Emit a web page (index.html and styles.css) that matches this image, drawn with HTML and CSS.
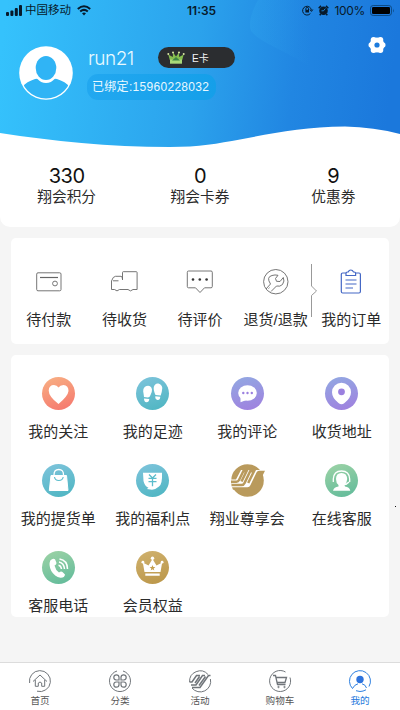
FILE: index.html
```html
<!DOCTYPE html>
<html lang="zh-CN">
<head>
<meta charset="utf-8">
<title>我的</title>
<link rel="stylesheet" href="styles.css">
</head>
<body>
<div class="app">
<header class="head">
  <svg class="wave" viewBox="0 0 400 150">
    <defs>
      <linearGradient id="sky" gradientUnits="userSpaceOnUse" x1="0" y1="55" x2="390" y2="100"><stop offset="0" stop-color="#35c2fc"/><stop offset=".5" stop-color="#2ba2ec"/><stop offset=".75" stop-color="#2186e2"/><stop offset="1" stop-color="#1b78dc"/></linearGradient>
      <linearGradient id="haze" gradientUnits="userSpaceOnUse" x1="250" y1="0" x2="310" y2="0"><stop offset="0" stop-color="#35aef0" stop-opacity=".22"/><stop offset="1" stop-color="#35aef0" stop-opacity="0"/></linearGradient>
    </defs>
    <path fill="url(#sky)" d="M0 0H400V134Q374 127 345 126.500C304 127 273 133 240 139.500C218 143.500 199 147 170 147C108 147 53 141 0 133Z"/>
    <path fill="url(#haze)" d="M258 0Q247 20 251 31C260 43 287 51 315 70V0Z"/>
  </svg>
  <div class="status">
    <svg class="signal" width="17" height="11" viewBox="0 0 17 11"><rect y="7" width="3" height="4" rx="1"/><rect x="4.400" y="5.500" width="3" height="5.500" rx="1"/><rect x="8.800" y="3" width="3" height="8" rx="1"/><rect x="13" y="0" width="3" height="11" rx="1"/></svg>
    <span class="carrier">中国移动</span>
    <svg class="wifi" width="14" height="11" viewBox="0 0 14 11" fill="none" stroke="#071a2b" stroke-width="2"><path d="M.8 4Q7-1.600 13.200 4M3.200 6.600Q7 3.200 10.800 6.600"/><path d="M5 8.300Q7 6.700 9 8.300L7 10.500Z" fill="#071a2b" stroke="none"/></svg>
    <b class="time">11:35</b>
    <div class="status-right">
      <svg width="11" height="11" viewBox="0 0 11 11" fill="none" stroke="#071a2b" stroke-width="1"><path d="M8.400 8.500A4.400 4.400 0 1 1 9.400 5.200M8 4.700l1.500 1.700L10.800 4.500M3.900 5V3.700a1.300 1.300 0 0 1 2.600 0V5"/><rect x="3.400" y="4.800" width="3.600" height="2.700" fill="#071a2b" stroke="none"/></svg>
      <svg width="11" height="11" viewBox="0 0 11 11"><circle cx="5.500" cy="5.700" r="4.300" fill="#071a2b"/><path d="M.7 3.200L3 .9M10.300 3.200L8 .9M2.700 9l-1 1.300M8.300 9l1 1.300" stroke="#071a2b" stroke-width="1.500"/><path d="M7.300 3.600L5.500 5.800H3.500" fill="none" stroke="#2490e5" stroke-width=".9"/></svg>
      <span>100%</span>
      <svg width="25" height="11" viewBox="0 0 25 11"><rect x=".5" y=".5" width="21" height="10" rx="2.700" fill="none" stroke="#0c4b86"/><rect x="2" y="2" width="18" height="7" rx="1.300" fill="#000"/><path d="M23 3.500q1.500 2 0 4z" fill="#0c4b86"/></svg>
    </div>
  </div>
  <div class="profile">
    <svg class="avatar" width="54" height="54" viewBox="0 0 54 54"><defs><clipPath id="face"><circle cx="27" cy="27" r="25.500"/></clipPath></defs><circle cx="27" cy="27" r="26.800" fill="#fff"/><g clip-path="url(#face)" fill="#30b4f5"><path d="M5 39Q12 33 20 32.500Q27 38 34 32.500Q42 33 49 39V56H5Z"/><ellipse cx="27" cy="22.500" rx="12.500" ry="14.500" fill="#fff"/><ellipse cx="27" cy="22" rx="10.300" ry="12"/></g></svg>
    <div class="who">
      <div class="name-row"><span class="name">run21</span>
        <span class="level"><svg width="18" height="14" viewBox="0 0 18 14"><path d="M2.800 9L1.300 3.500L5.800 6L6 1.500L9 5.500L12 1.500L12.200 6L16.700 3.500L15.200 9Z" fill="#85bd4f"/><path d="M3 8.500h12v4.200H3z" fill="#a8d978"/><path d="M5 9.500h8L9 6z" fill="#3d8644"/><g fill="#dce9a6"><circle cx="1.300" cy="3" r="1"/><circle cx="6" cy="1.400" r="1"/><circle cx="12" cy="1.400" r="1"/><circle cx="16.700" cy="3" r="1"/></g></svg><span>E卡</span></span>
      </div>
      <div class="bound">已绑定:15960228032</div>
    </div>
    <svg class="gear" width="18" height="18" viewBox="0 0 18 18"><g fill="#fff"><circle cx="9" cy="9" r="7.400"/><circle cx="5.600" cy="3.900" r="2.900"/><circle cx="12.400" cy="3.900" r="2.900"/><circle cx="3.200" cy="9" r="2.700"/><circle cx="14.800" cy="9" r="2.700"/><circle cx="5.600" cy="14.100" r="2.900"/><circle cx="12.400" cy="14.100" r="2.900"/></g><circle cx="9" cy="9" r="2.600" fill="#1c7bdd"/></svg>
  </div>
  <div class="stats">
    <div><b>330</b><span>翔会积分</span></div>
    <div><b>0</b><span>翔会卡券</span></div>
    <div><b>9</b><span>优惠劵</span></div>
  </div>
</header>

<section class="card orders">
  <div class="order"><svg viewBox="0 0 28 28"><rect x="1.700" y="4.800" width="24.300" height="18" rx="1.300"/><path d="M5 9.500h18" stroke-width="1.200"/><circle cx="20" cy="15.500" r="2.400"/></svg><span>待付款</span></div>
  <div class="order"><svg viewBox="0 0 28 28"><path d="M12.500 12V4.500q0-.8.800-.8h13q.8 0 .8.800V21.500H23q-2.500 2.800-5 0H9.500q-2.500 2.800-5 0H1.500V13q1.500-4.700 4-4.700H11q1.500 0 1.500 3.200M3 12.800h5.500"/></svg><span>待收货</span></div>
  <div class="order"><svg viewBox="0 0 28 28"><path d="M2.500 3H25q1.300 0 1.300 1.300V18.500q0 1.300-1.300 1.300H18.500L14 24.500L9.500 19.800H2.500q-1.200 0-1.200-1.300V4.300Q1.300 3 2.500 3Z"/><g fill="#333" stroke="none"><circle cx="7" cy="11.500" r="1.300"/><circle cx="13.800" cy="11.500" r="1.300"/><circle cx="20.600" cy="11.500" r="1.300"/></g></svg><span>待评价</span></div>
  <div class="order"><svg viewBox="0 0 28 28"><circle cx="13.800" cy="13.700" r="12.200"/><path d="M4 21L8.500 16Q4 9 10 7.500Q13 6.500 16 7.300L13.500 10.500L14.500 13.300L18 13.500L21.300 9.500Q23 13 20.500 16.500Q18 19 14.500 18L9 23.500"/><path d="M6.500 20.500l1-.8"/></svg><span>退货/退款</span></div>
  <div class="order mine"><svg viewBox="0 0 28 28"><path d="M9 5H5.700Q4.300 5 4.300 6.400V23.500Q4.300 25 5.700 25H22Q23.400 25 23.400 23.500V6.400Q23.400 5 22 5H18.500M9 7.500V5Q9 4 10.500 4H11.200Q12 2 13.800 2T16.500 4H17.200Q18.600 4 18.600 5V7.500ZM8.500 12h11M8.500 16h11M8.500 20h7.500" stroke-width="1.200"/></svg><span>我的订单</span></div>
  <svg class="divider" width="8" height="54" viewBox="0 0 8 54"><path d="M1.500 0V22L6.500 27L1.500 31.500V53" fill="none" stroke="#999"/></svg>
</section>

<section class="card tools">
  <div class="tool"><i class="coral"><svg viewBox="0 0 33 33"><path d="M16.500 27Q6.700 19.500 6.700 13.500Q7 8 12 8Q15 8 16.500 10.500Q18 8 21.500 8Q26.500 8.500 26.500 14Q26 19 16.500 27Z"/></svg></i><span>我的关注</span></div>
  <div class="tool"><i class="aqua"><svg viewBox="0 0 33 33"><path d="M10.500 9Q15 8 16 12.500Q16.200 15 14.500 18Q14 20 12 20.500L8 20Q7.700 17 7.200 14.500Q7 10 10.500 9ZM8 21.500l5.300.5Q13 25.300 10.500 25.300Q8 25 8 21.500ZM22.500 6.500Q26 7.500 26.300 11Q26 15 24.700 18.500L19.500 18Q17.200 13 17.800 10Q19 5.800 22.500 6.500ZM19.300 19.300l5 .5Q24 23.300 21.500 23Q19 22.500 19.300 19.300Z"/></svg></i><span>我的足迹</span></div>
  <div class="tool"><i class="violet"><svg viewBox="0 0 33 33"><ellipse cx="16.500" cy="16" rx="9.300" ry="7.800"/><path d="M9.500 20L9.500 25.300L15.500 23Z"/><g fill="#9b80df"><circle cx="12.300" cy="16" r="1.200"/><circle cx="16.500" cy="16" r="1.200"/><circle cx="20.800" cy="16" r="1.200"/></g></svg></i><span>我的评论</span></div>
  <div class="tool"><i class="violet"><svg viewBox="0 0 33 33"><path d="M16.500 5.800A9.500 9.500 0 0 1 26 15.300Q26 21 19.500 26Q16.500 28.500 13.500 26Q7 21 7 15.300A9.500 9.500 0 0 1 16.500 5.800Z"/><circle cx="16.500" cy="14.800" r="3.400" fill="#9b80df"/></svg></i><span>收货地址</span></div>
  <div class="tool"><i class="aqua"><svg viewBox="0 0 33 33"><path d="M9 11.500H24.500L26 26.500H7.300Z" stroke="#fff" stroke-linejoin="round"/><path d="M12 11Q12 5.500 16.800 5.500T21.500 11" fill="none" stroke="#fff" stroke-width="1.300"/><path d="M12.500 13Q13 16.500 16.800 16.500T21.200 13" fill="none" stroke="#5bbdcc" stroke-width="1.100"/></svg></i><span>我的提货单</span></div>
  <div class="tool"><i class="aqua"><svg viewBox="0 0 33 33"><path d="M7 8.700H26Q26.500 20 23 22.500Q20 25.200 16 25.800L10.800 25L12.500 23.700Q8.500 22 7.500 17Z"/><path d="M13 10.500L16.500 14L20 10.500M12.500 14.300h8M12.500 17.700h8M16.500 14v8.300" fill="none" stroke="#5bbdcc" stroke-width="1.300"/></svg></i><span>我的福利点</span></div>
  <div class="tool"><svg class="gold-logo" viewBox="0 0 33 33"><circle cx="16.500" cy="16.500" r="16.300" fill="#b99a5c"/><path d="M0 15.500H5L10 6H33.500L25 22.500Q23.500 25 21 25H1Z" fill="#fff"/><g fill="none" stroke="#b99a5c" stroke-width="2.500"><path d="M0 17.700H5.500Q7.200 17.700 8 16L12.300 7.300H15.500L10.500 17.500"/><path d="M.5 20.900H10.500Q12.700 20.900 13.600 18.900L19.200 7.300H23L17.200 19"/></g><path d="M1 23.200H16.500Q18.500 23.200 19.500 21L25.500 8.500Q26.300 6.800 28 6.800H34L26 22.800Q24.500 25.700 21.500 25.700H2Z" fill="#b99a5c"/></svg><span>翔业尊享会</span></div>
  <div class="tool"><i class="green"><svg viewBox="0 0 33 33"><path d="M16.500 9Q22 9 22.200 15Q22 19 19.500 21L20 22.500Q24.500 23 25.300 26.700H8Q9 23 13.500 22.500L13.500 21Q11 19 11 15Q11 9 16.500 9Z"/><path d="M8.300 18V15Q8.700 7 16.500 7T24.700 15V18M24 18Q22 20.500 18.500 20.500" fill="none" stroke="#fff" stroke-width="1.300"/></svg></i><span>在线客服</span></div>
  <div class="tool"><i class="green"><svg viewBox="0 0 33 33"><path d="M8.300 9.500Q11 6.500 13 8.300L14.500 12Q14.500 13.500 12.500 14.500Q13.500 19 17 21.500Q19 20 20.500 21L23 23.500Q22.500 27 18.500 26.800Q12.500 25.500 9.300 20Q6.300 14 8.300 9.500Z"/><path d="M16.500 14.200Q19 14.500 19.500 18M17 11Q22 12 22.500 18M17.500 8Q25.500 9.300 25.500 18" fill="none" stroke="#fff" stroke-width="1.500"/></svg></i><span>客服电话</span></div>
  <div class="tool"><i class="gold"><svg viewBox="0 0 33 33"><path d="M8.500 21L6.800 11.500L12.500 14.500L16.500 8L20.500 14.500L26.200 11.500L24.500 21ZM9.300 22.500h14.400v2.300H9.300z"/><circle cx="16.500" cy="7.300" r="1.700"/><circle cx="6.900" cy="11.200" r="1.400"/><circle cx="26.100" cy="11.200" r="1.400"/><path d="M16.500 14l.8 2 2.100.1-1.700 1.300.6 2-1.800-1.100-1.800 1.100.6-2-1.700-1.300 2.100-.1z" fill="#c5a04f"/></svg></i><span>会员权益</span></div>
</section>
<div class="speck"></div>

<nav class="tabs">
  <div><svg viewBox="0 0 24 24"><path d="M1.600 14A10.500 10.500 0 1 1 9 22.200"/><path d="M5 12.500L12 6L19 12.500M7.300 11V17.300H10.300V14Q12 12 13.700 14V17.300H16.700V11"/></svg><span>首页</span></div>
  <div><svg viewBox="0 0 24 24"><path d="M15 2A10.500 10.500 0 1 1 9 2"/><path d="M11 11H8.200A2.600 2.600 0 1 1 11 8.300ZM13 11V8.300A2.600 2.600 0 1 1 15.800 11ZM11 13V15.700A2.600 2.600 0 1 1 8.200 13ZM13 13H15.800A2.600 2.600 0 1 1 13 15.700Z" stroke-width="1.200"/></svg><span>分类</span></div>
  <div><svg viewBox="0 0 24 24"><path d="M1.600 13A10.500 10.500 0 0 1 20 5.500M22.400 10A10.500 10.500 0 0 1 4 19"/><path d="M1.500 13H4L8.500 6.500H12M3 16H8L14.500 6.500H17M4 18.500H12L20.500 6.500H22.500M17.500 7.500L11 16.500M11.500 7.500L7 14" stroke-width="1.500"/></svg><span>活动</span></div>
  <div><svg viewBox="0 0 24 24"><path d="M17.500 3A10.500 10.500 0 1 0 22 8.500"/><path d="M5 6.500H7.500L9.500 15.500H17.500M8 8.500H18.500L17 13.500H9" stroke-width="1.300"/><circle cx="10.500" cy="18" r=".7"/><circle cx="16.500" cy="18" r=".7"/></svg><span>购物车</span></div>
  <div class="active"><svg viewBox="0 0 24 24"><path d="M4.500 19.500A10.500 10.500 0 1 1 21 17.500M18 20.800Q15 22.500 12 22.500L8 21.700M4.500 19.500Q6.500 15.500 10 14.800M14 14.800Q17.500 15.500 18.500 19"/><circle cx="12" cy="10.500" r="3.700" fill="#2e73dd" stroke="none"/></svg><span>我的</span></div>
</nav>
</div>
</body>
</html>
```
FILE: styles.css
```css
* { box-sizing: border-box; }
body {
  margin: 0;
  background: #f5f5f5;
  color: #2b2b2b;
  font-family: "Liberation Sans", "Noto Sans CJK SC", sans-serif;
}
svg { display: block; flex: none; overflow: visible; }
.app {
  position: relative;
  width: 400px;
  height: 710px;
  display: flex;
  flex-direction: column;
  overflow: hidden;
}
.head {
  position: relative;
  height: 227px;
  background: #fff;
  border-radius: 0 0 10px 10px;
}
.wave { position: absolute; left: 0; top: 0; width: 400px; height: 150px; }
.status {
  position: relative;
  height: 20px;
  display: flex;
  align-items: center;
  padding: 1px 5px 0 6px;
  font-size: 12px;
  line-height: 19px;
  color: #071a2b;
}
.signal { fill: #071a2b; }
.carrier { margin-left: 2px; width: 48px; font-size: 11.500px; white-space: nowrap; }
.wifi { margin-left: 4px; }
.time {
  margin-left: 96px;
  font-family: Inter, sans-serif;
  font-size: 12px;
  font-weight: 600;
  letter-spacing: 0;
}
.status-right { margin-left: auto; display: flex; align-items: center; gap: 5px; }
.status-right span { font-family: Inter, sans-serif; font-size: 12px; letter-spacing: -.3px; }
.profile { position: relative; display: flex; padding: 26px 14px 0 19px; }
.who { margin-left: 14px; }
.name-row { display: flex; align-items: flex-start; height: 28px; }
.name {
  width: 71px;
  font-family: Inter, sans-serif;
  font-size: 19px;
  font-weight: 300;
  line-height: 25px;
  letter-spacing: -.5px;
  color: #e9faff;
  padding-left: 1px;
}
.level {
  display: flex;
  align-items: center;
  gap: 7px;
  width: 77px;
  height: 21px;
  margin-top: 1px;
  padding-left: 9px;
  border-radius: 11px;
  background: #2b2d30;
  color: #f4f4f4;
  font-size: 10px;
}
.bound {
  width: 129px;
  height: 26px;
  border-radius: 11px;
  background: linear-gradient(90deg, #22a8f0, #159fe9);
  color: #e8f8ff;
  font-size: 12px;
  line-height: 26px;
  padding-left: 5px;
  letter-spacing: .3px;
  white-space: nowrap;
}
.gear { margin: -10px 0 0 auto; }
.stats {
  position: relative;
  display: grid;
  grid-template-columns: repeat(3, 1fr);
  padding-top: 64px;
  text-align: center;
}
.stats b {
  display: block;
  font: 400 20px/24px Inter, sans-serif;
  letter-spacing: -.5px;
  color: #111;
}
.stats span { display: block; font-size: 14.700px; line-height: 18px; }
.card { flex: none; width: 378px; margin-left: 11px; background: #fff; border-radius: 5px; }
.orders {
  position: relative;
  height: 106px;
  margin-top: 11px;
  display: grid;
  grid-template-columns: repeat(5, 1fr);
}
.order { display: flex; flex-direction: column; align-items: center; padding-top: 30px; }
.order svg { width: 28px; height: 28px; fill: none; stroke: #666; stroke-width: .9; }
.order span { font-size: 15px; line-height: 20px; margin-top: 14px; white-space: nowrap; }
.order.mine svg { stroke: #4568c5; }
.divider { position: absolute; left: 299px; top: 26px; }
.tools {
  height: 262px;
  margin-top: 11px;
  padding-top: 22px;
  display: grid;
  grid-template-columns: repeat(4, 1fr);
  grid-auto-rows: 87px;
  align-content: start;
}
.tool { display: flex; flex-direction: column; align-items: center; }
.tool span { font-size: 15px; line-height: 20px; margin-top: 12px; white-space: nowrap; }
.tool i { width: 33px; height: 33px; border-radius: 50%; }
.tool svg { width: 33px; height: 33px; fill: #fff; }
.coral { background: linear-gradient(160deg, #f8b184, #f5756d); }
.aqua { background: linear-gradient(160deg, #7fc4dc, #4cb5c1); }
.violet { background: linear-gradient(165deg, #92a9e2, #a07fdf); }
.green { background: linear-gradient(160deg, #9ed3a6, #5fba9a); }
.gold { background: linear-gradient(160deg, #d0b26f, #ba9547); }
.speck { position: absolute; left: 395px; top: 506px; width: 1px; height: 1px; background: #111; }
.tabs {
  height: 48px;
  margin-top: auto;
  display: grid;
  grid-template-columns: repeat(5, 1fr);
  background: #fff;
  border-top: 1px solid #dcdcdc;
  color: #555;
}
.tabs div { display: flex; flex-direction: column; align-items: center; padding-top: 5.500px; }
.tabs svg { width: 24px; height: 24px; fill: none; stroke: #70757a; stroke-width: 1; }
.tabs span { font-size: 9.600px; line-height: 14px; margin-top: 1.500px; }
.tabs .active { color: #2477dc; }
.tabs .active svg { stroke: #2e80e0; }
```
